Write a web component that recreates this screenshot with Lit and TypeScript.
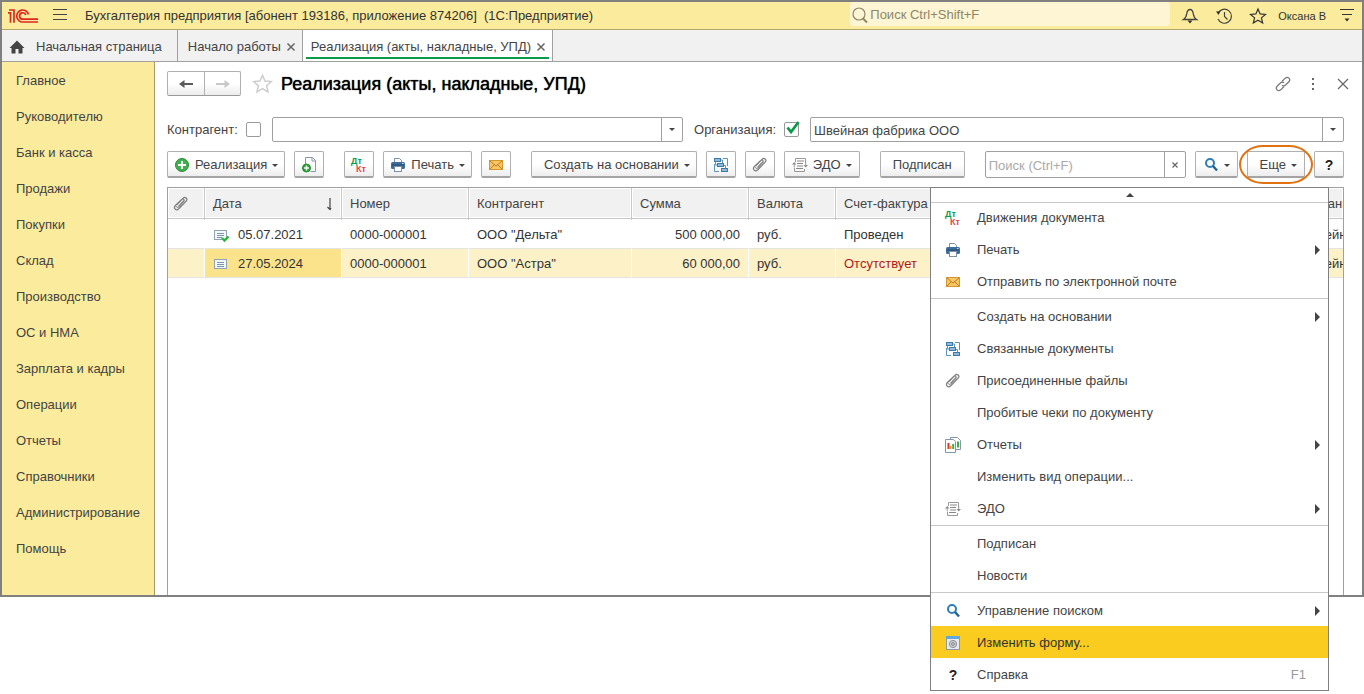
import { LitElement, html, svg, css, nothing, TemplateResult } from "lit";
import { customElement, property, state } from "lit/decorators.js";
import { classMap } from "lit/directives/class-map.js";

const ICONS: Record<string, TemplateResult> = {
  plus: svg`<circle cx="8" cy="8" r="6.500" fill="#3fb04c" stroke="#2a8a38"/><path d="M8 4v8M4 8h8" stroke="#fff" stroke-width="2"/>`,
  copy: svg`<path d="M4.500 7V.5h7l3 3v11h-5" fill="#fff" stroke="#8496a8"/><path d="M11 .5V4h3.500" fill="none" stroke="#8496a8"/><circle cx="5.500" cy="11" r="4" fill="#2fa33d" stroke="#1f8a2e"/><path d="M5.500 8.500v5M3 11h5" stroke="#fff" stroke-width="1.400"/>`,
  dtkt: svg`<g font-family="Liberation Sans, Arial, sans-serif" font-size="9" font-weight="bold"><text x="0" y="7" fill="#0a9a4a">Дт</text><text x="5" y="15" fill="#e04848">Кт</text></g>`,
  print: svg`<path d="M4.500 5V1.500h5l2 2V5" fill="#fff" stroke="#7890a8"/><rect x="1" y="5" width="14" height="7" rx="1.500" fill="#3f6d99"/><path d="M2 8h12" stroke="#24486c"/><path d="M12 6.500h1.500" stroke="#cfe0ee"/><rect x="4.500" y="9.500" width="7" height="5" fill="#fff" stroke="#7890a8"/>`,
  mail: svg`<rect x="1.500" y="3.500" width="13" height="9" fill="#f6c566" stroke="#d6962e"/><path d="M2 4l6 5 6-5M2 12l4.500-4.500M14 12L9.500 7.500" fill="none" stroke="#c07c1c"/>`,
  tree: svg`<g fill="#8fb8da" stroke="#3c7aa8"><rect x="1.500" y="1.500" width="6" height="3"/><rect x="4.500" y="6.500" width="6" height="3"/><rect x="8.500" y="11.500" width="6" height="3"/></g><path d="M10 1.500h4.500V9M1.500 7v7.500H6M2.500 5v3H4M8 3h1.500v3M12.500 11V8.500H11" fill="none" stroke="#5b93bd"/>`,
  clip: svg`<path d="M4 8.500l6-6.200c2.200-2.200 5.200.5 3.200 2.800l-7.400 7.600c-2.800 2.600-5.800-.5-3.400-3.200L9 3.200c1.300-1 2.700.4 1.700 1.600L5.500 10.300" fill="none" stroke="#7c7c7c" stroke-width="1.200"/><path d="M11.800 4.500L5.500 11.300c-1.200.9-2.400-.2-1.500-1.400" fill="none" stroke="#7c7c7c"/>`,
  edo: svg`<path d="M3.500 5V1.500h10V6M2.500 10.500v4h10V12" fill="none" stroke="#999"/><path d="M5 4h7M5 6.500h6M5 9h6M4 11.500h7" stroke="#888"/><path d="M0 7.500h4.500L2.200 5zM11.500 8h4.500l-2.300 2.500z" fill="#8d8d8d"/><path d="M2.200 7v3M13.700 5v3" stroke="#999"/>`,
  search: svg`<circle cx="7" cy="6" r="4" fill="none" stroke="#2f7fb5" stroke-width="2"/><path d="M10 9l4 4.500" stroke="#1f6496" stroke-width="2.400"/>`,
  report: svg`<path d="M5.500.5h7l3 3v9h-10z" fill="#fff" stroke="#8496a8"/><path d="M13 4.500v6" stroke="#3cae4a" stroke-width="2"/><path d="M.5 2.500h8l2 2v11H.5z" fill="#fff" stroke="#8496a8"/><path d="M3.500 6v6" stroke="#d8392b" stroke-width="2"/><path d="M5.800 9v3" stroke="#f08c2a" stroke-width="1.500"/><path d="M8.200 7v5" stroke="#3cae4a" stroke-width="2"/>`,
  form: svg`<rect x="1.500" y="1.500" width="13" height="13" fill="#e7e9ea" stroke="#8e9aa3"/><rect x="1" y="1" width="14" height="3" fill="#5fa8e0"/><circle cx="8" cy="9" r="3.600" fill="#c9ced2" stroke="#8a9299"/><circle cx="8" cy="9" r="1.300" fill="#fff" stroke="#777"/>`,
  doc: svg`<rect x="1.500" y="3.500" width="12" height="9" fill="#f4f8fb" stroke="#8fa3b5"/><path d="M4 6.500h7M4 8.500h7M4 10.500h7" stroke="#7d95aa"/>`,
  docOk: svg`<rect x="1.500" y="3.500" width="12" height="9" fill="#f4f8fb" stroke="#8fa3b5"/><path d="M4 6.500h7M4 8.500h7M4 10.500h5" stroke="#7d95aa"/><path d="M9 11l2.500 2.500L15.500 9.500" fill="none" stroke="#2cb53c" stroke-width="2.400"/>`,
  home: svg`<path d="M8 1.500L15.500 9H13.500v5.500H9.500V10h-3v4.500H2.500V9H.5z" fill="#444"/>`,
  back: svg`<path d="M1 8l5.500-4v3H15v2H6.500v3z" fill="#5a5a5a"/>`,
  forward: svg`<path d="M15 8L9.500 4v3H1v2h8.500v3z" fill="#c8c8c8"/>`,
  link: svg`<g fill="none" stroke="#777" stroke-width="1.200"><path d="M7 5.500l3.200-3.300c2.800-2.400 6 .9 3.700 3.600L10.600 9c-1.200 1.100-2.600 1-3.600.2"/><path d="M9 10.500l-3.200 3.300c-2.800 2.400-6-.9-3.700-3.600L5.400 7C6.600 5.900 8 6 9 6.800"/></g>`,
  dots: svg`<path d="M7 2h2v2H7zM7 7h2v2H7zM7 12h2v2H7z" fill="#666"/>`,
  close: svg`<path d="M3 3l10 10M13 3L3 13" stroke="#666" stroke-width="1.200"/>`,
  tabClose: svg`<path d="M4.500 4.500l7 7M11.500 4.500l-7 7" stroke="#666" stroke-width="1.500"/>`,
  smallClose: svg`<path d="M5.500 5.500l5 5M10.500 5.500l-5 5" stroke="#666" stroke-width="1.200"/>`,
  sortDown: svg`<path d="M8 2v11M5.500 11L8 13.500 9 12" fill="none" stroke="#444" stroke-width="1.200"/>`,
  bell: svg`<path d="M1.500 11.500c2-1.200 2.800-3 3.300-6C5.200 3 6 1.500 8 1.500s2.800 1.500 3.200 4c.5 3 1.300 4.800 3.300 6z" fill="none" stroke="#444" stroke-width="1.300"/><path d="M5.500 12.500h5L8 15.500z" fill="#333"/>`,
  history: svg`<path d="M2.200 5A7 7 0 1 1 2 11" fill="none" stroke="#444" stroke-width="1.200"/><path d="M0 3.500l4.500-.2L2.500 7z" fill="#333"/><path d="M8.500 4v4.500l3 3" fill="none" stroke="#444" stroke-width="1.200"/>`,
  star: svg`<path d="M8 1l2.100 4.900 5.400.5-4.100 3.500 1.300 5.200L8 12.300l-4.700 2.800 1.300-5.200L.5 6.400l5.400-.5z" fill="none" stroke="currentColor" stroke-width="1.200"/>`,
  lines: svg`<path d="M1 3.500h14M3 8.500h10" stroke="#333" stroke-width="1.200"/><path d="M5.500 12.500h5L8 15.500z" fill="#333"/>`,
  burger: svg`<path d="M1 3.500h14M1 8.500h14M1 13.500h14" stroke="#444"/>`,
  lens: svg`<circle cx="7" cy="7" r="6" fill="none" stroke="#8d8668" stroke-width="1.200"/><path d="M11 11.500l4 4" stroke="#8d8668" stroke-width="2"/>`,
};

@customElement("ui-icon")
class UiIcon extends LitElement {
  @property() name = "";
  static styles = css`
    :host { display: inline-flex; flex: none; width: 16px; height: 16px; }
    svg { display: block; width: 100%; height: 100%; overflow: visible; }
  `;
  render() {
    return html`<svg viewBox="0 0 16 16" aria-hidden="true">${ICONS[this.name] ?? nothing}</svg>`;
  }
}

interface MenuEntry { text: string; icon?: string; sub?: boolean; key?: string; }

const SECTIONS = ["Главное", "Руководителю", "Банк и касса", "Продажи", "Покупки", "Склад", "Производство",
  "ОС и НМА", "Зарплата и кадры", "Операции", "Отчеты", "Справочники", "Администрирование", "Помощь"];

const MENU: MenuEntry[][] = [
  [
    { text: "Движения документа", icon: "dtkt" },
    { text: "Печать", icon: "print", sub: true },
    { text: "Отправить по электронной почте", icon: "mail" },
  ],
  [
    { text: "Создать на основании", sub: true },
    { text: "Связанные документы", icon: "tree" },
    { text: "Присоединенные файлы", icon: "clip" },
    { text: "Пробитые чеки по документу" },
    { text: "Отчеты", icon: "report", sub: true },
    { text: "Изменить вид операции..." },
    { text: "ЭДО", icon: "edo", sub: true },
  ],
  [{ text: "Подписан" }, { text: "Новости" }],
  [
    { text: "Управление поиском", icon: "search", sub: true },
    { text: "Изменить форму...", icon: "form" },
    { text: "Справка", icon: "help", key: "F1" },
  ],
];

const ROWS = [
  { icon: "docOk", date: "05.07.2021", num: "0000-000001", party: "ООО \"Дельта\"", sum: "500 000,00", cur: "руб.", invoice: "Проведен", org: "Швейная" },
  { icon: "doc", date: "27.05.2024", num: "0000-000001", party: "ООО \"Астра\"", sum: "60 000,00", cur: "руб.", invoice: "Отсутствует", org: "Швейная" },
];

@customElement("app-root")
class AppRoot extends LitElement {
  @state() private selected = 1;
  @state() private active = "Изменить форму...";

  static styles = css`
    :host { display: block; min-height: 100vh; background: #fff; font: 13px/16px "Liberation Sans", Arial, sans-serif; color: #444; }
    * { box-sizing: border-box; }
    button, input { font: inherit; color: inherit; margin: 0; }
    button { padding: 0; border: 0; background: none; }
    a { color: inherit; text-decoration: none; }

    .window { display: flex; flex-direction: column; border: 2px solid #808080; background: #fff; }

    .titlebar { display: flex; align-items: center; height: 28px; padding: 0 7px 0 6px; background: #fbeb9c; border-bottom: 1px solid #b3a76c; }
    .logo { flex: none; width: 30px; height: 16px; margin-right: 14px; }
    .app-title { margin-left: 17px; flex: 1; white-space: nowrap; color: #333; }
    .global-search { display: flex; align-items: center; gap: 2px; width: 320px; height: 24px; align-self: flex-start; padding: 2px 2px 0; background: #fdf5d3; border-radius: 3px; }
    .global-search input { flex: 1; min-width: 0; border: 0; padding: 0; background: none; outline: 0; }
    .global-search input::placeholder { color: #8d8668; opacity: 1; }
    .tools { display: flex; align-items: center; gap: 18px; margin-left: 12px; color: #333; }
    .tools button { display: flex; }
    .user { font-size: 11px; margin: 0 13px 0 12px; color: #333; }

    .tabs { display: flex; height: 32px; background: #f1f1f1; border-bottom: 1px solid #a0a0a0; }
    .tab { display: flex; align-items: center; gap: 2px; padding: 2px 3px 0 10px; border-right: 1px solid #a0a0a0; white-space: nowrap; }
    .tab.start { gap: 11px; padding: 2px 15px 0 7px; }
    .tab.current { position: relative; padding-left: 8px; background: #fff; }
    .tab.current::after { content: ""; position: absolute; left: 3px; right: 3px; bottom: 2px; height: 2px; background: #0a9a4a; }
    .tab button { display: flex; }

    .body { display: flex; }
    .sidebar { flex: none; width: 153px; padding-bottom: 29px; background: #fbeb9c; border-right: 1px solid #a79c68; }
    .sidebar a { display: flex; align-items: center; height: 36px; padding: 2px 0 0 14px; white-space: nowrap; }

    .main { flex: 1; min-width: 0; display: flex; flex-direction: column; padding: 9px 18px 0 12px; }
    .heading { display: flex; align-items: center; height: 25px; }
    .nav { display: flex; height: 25px; border: 1px solid #b0b0b0; border-bottom-color: #999; border-radius: 2px; background: linear-gradient(#fff 50%, #ececec); }
    .nav button { display: flex; align-items: center; justify-content: center; width: 36px; }
    .nav button + button { border-left: 1px solid #b0b0b0; }
    .fav { display: flex; margin: 0 9px 0 12px; color: #ccc; }
    .fav ui-icon { width: 19px; height: 19px; }
    h1 { flex: 1; margin: 0; font-size: 18px; line-height: 24px; font-weight: 400; color: #000; text-shadow: 0 0 1px #000; white-space: nowrap; }
    .window-tools { display: flex; gap: 14px; margin-right: -7px; }
    .window-tools button { display: flex; }

    .filters { display: flex; align-items: center; margin-top: 21px; height: 25px; }
    .field-label { margin-right: 8px; white-space: nowrap; }
    .check { display: grid; flex: none; margin-right: 11px; }
    .check > * { grid-area: 1 / 1; }
    .check input { appearance: none; width: 15px; height: 15px; border: 1px solid #999; border-radius: 2px; background: #fff; }
    .check svg { width: 15px; height: 15px; overflow: visible; pointer-events: none; }
    .combo { display: flex; min-width: 0; height: 25px; border: 1px solid #a0a0a0; border-radius: 2px; background: #fff; }
    .combo input { flex: 1; min-width: 0; border: 0; outline: 0; padding: 2px 3px 0; background: none; }
    .combo button { display: flex; align-items: center; justify-content: center; width: 21px; border-left: 1px solid #a0a0a0; }
    .party { flex: 10 1 0; margin-right: 11px; }
    .org { flex: 13 1 0; }

    .toolbar { position: relative; display: flex; gap: 9px; margin-top: 9px; height: 27px; }
    .btn { position: relative; display: flex; align-items: center; justify-content: center; gap: 5px; flex: none; padding: 2px 6px 0; min-width: 30px; height: 27px; border: 1px solid #b0b0b0; border-bottom: 2px solid #a4a4a4; border-radius: 2px; background: linear-gradient(#fff 50%, #ededed); white-space: nowrap; }
    .btn.apart { margin-left: 11px; }
    .btn.text { padding: 2px 12px 0; }
    .btn.wide { padding: 2px 7px 0; }
    .btn.create, .btn.more { padding-left: 12px; }
    .btn.help, .q { font-size: 14px; font-weight: 700; color: #222; }
    .caret { flex: none; border: solid transparent; border-width: 3px 3px 0; border-top-color: #444; }
    .combo.find { flex: 1; height: 27px; margin-left: 11px; }
    .find input::placeholder { color: #aaa; opacity: 1; }
    .ring { position: absolute; inset: -7px -9px -8px; border: 2px solid #e2710f; border-radius: 26px / 21px; pointer-events: none; }

    .list { flex: 1; margin-top: 9px; border: 1px solid #a0a0a0; border-bottom: 0; overflow: hidden; }
    table { width: 100%; table-layout: fixed; border-collapse: separate; border-spacing: 0; color: #333; }
    th, td { padding: 0 8px; overflow: hidden; white-space: nowrap; text-align: left; font-weight: 400; }
    th { height: 32px; background: #f1f1f1; border-right: 1px solid #c8c8c8; color: #444;
      box-shadow: inset 0 -1px #fff, inset 0 -2px #c8c8c8, inset 0 -3px #fff, inset 1px 1px #fff, inset -1px 0 #fff; }
    td { height: 29px; padding-top: 2px; border-right: 1px solid #fff; border-bottom: 1px solid #e4e4e4; }
    th ui-icon, td ui-icon { vertical-align: middle; }
    .c-clip { width: 37px; }
    .c-date { width: 137px; }
    .c-num { width: 127px; }
    .c-party { width: 163px; }
    .c-sum { width: 117px; }
    .c-cur { width: 87px; }
    .c-inv { width: 127px; }
    .c-org { width: 47px; }
    .c-org-cell { padding-left: 10px; padding-right: 0; border-right: 0; }
    .num { text-align: right; }
    .with-icon { display: flex; align-items: center; gap: 9px; }
    .sortable { display: flex; justify-content: space-between; margin-right: -5px; }
    .clip-head { padding-left: 5px; }
    tr.sel td { background: #fdf1c7; }
    tr.sel td.cell { background: #fbe38c; }
    tr td.missing { color: #b01818; }

    .menu { position: absolute; z-index: 2; top: 36px; right: 15px; width: 399px; background: #fff; border: 1px solid #808080; }
    .scroll-up { display: flex; align-items: center; justify-content: center; width: 100%; height: 15px; margin-bottom: -2px; border-bottom: 1px solid #c8c8c8; }
    .scroll-up i { border: solid transparent; border-width: 0 4px 4px; border-bottom-color: #444; }
    .group + .group { margin-top: 1px; border-top: 1px solid #c8c8c8; padding-top: 1px; }
    .item { display: flex; align-items: center; width: 100%; height: 32px; padding: 2px 8px 0 14px; text-align: left; }
    .item.active { background: #facc1f; color: #333; }
    .slot { display: flex; justify-content: center; width: 16px; margin-right: 16px; }
    .item-text { flex: 1; }
    .key { margin-right: 14px; color: #999; }
    .arrow { border: solid transparent; border-width: 5px 0 5px 5px; border-left-color: #444; }
  `;

  private tool(icon: string, label: string, cls = "") {
    return html`<button class="btn ${cls}" aria-label=${label}><ui-icon name=${icon}></ui-icon></button>`;
  }

  private renderMenu() {
    return html`<div class="menu" role="menu">
      <button class="scroll-up" aria-label="Вверх"><i></i></button>
      ${MENU.map((group) => html`<div class="group">
        ${group.map((e) => html`<button role="menuitem"
          class=${classMap({ item: true, active: e.text === this.active })}
          @mouseenter=${() => { this.active = e.text; }}>
          <span class="slot">${e.icon === "help" ? html`<span class="q">?</span>` : e.icon ? html`<ui-icon name=${e.icon}></ui-icon>` : nothing}</span>
          <span class="item-text">${e.text}</span>
          ${e.key ? html`<span class="key">${e.key}</span>` : nothing}
          ${e.sub ? html`<span class="arrow"></span>` : nothing}
        </button>`)}
      </div>`)}
    </div>`;
  }

  render() {
    return html`
      <div class="window">
        <header class="titlebar">
          <svg class="logo" viewBox="0 0 30 16" aria-hidden="true">
            <g fill="none" stroke="#dc2a20" stroke-width="1.700">
              <path d="M0 4.800h2.500V14.800M1 2h5V14.800"/>
              <path d="M20.500 6.500A6 6 0 1 0 15 14H30M17.800 7A3.200 3.200 0 1 0 15 11.200H30"/>
            </g>
          </svg>
          <button aria-label="Меню"><ui-icon name="burger"></ui-icon></button>
          <span class="app-title">Бухгалтерия предприятия [абонент 193186, приложение 874206]&nbsp; (1С:Предприятие)</span>
          <label class="global-search"><ui-icon name="lens"></ui-icon><input aria-label="Поиск" placeholder="Поиск Ctrl+Shift+F"></label>
          <div class="tools">
            <button aria-label="Уведомления"><ui-icon name="bell"></ui-icon></button>
            <button aria-label="История"><ui-icon name="history"></ui-icon></button>
            <button aria-label="Избранное"><ui-icon name="star"></ui-icon></button>
          </div>
          <a class="user" href="#">Оксана В</a>
          <button aria-label="Настройки"><ui-icon name="lines"></ui-icon></button>
        </header>

        <nav class="tabs">
          <a class="tab start" href="#"><ui-icon name="home"></ui-icon>Начальная страница</a>
          <div class="tab"><a href="#">Начало работы</a><button aria-label="Закрыть"><ui-icon name="tabClose"></ui-icon></button></div>
          <div class="tab current"><a href="#">Реализация (акты, накладные, УПД)</a><button aria-label="Закрыть"><ui-icon name="tabClose"></ui-icon></button></div>
        </nav>

        <div class="body">
          <nav class="sidebar">${SECTIONS.map((s) => html`<a href="#">${s}</a>`)}</nav>
          <main class="main">
            <div class="heading">
              <div class="nav">
                <button aria-label="Назад"><ui-icon name="back"></ui-icon></button>
                <button aria-label="Вперед" disabled><ui-icon name="forward"></ui-icon></button>
              </div>
              <button class="fav" aria-label="В избранное"><ui-icon name="star"></ui-icon></button>
              <h1>Реализация (акты, накладные, УПД)</h1>
              <div class="window-tools">
                <button aria-label="Ссылка"><ui-icon name="link"></ui-icon></button>
                <button aria-label="Действия"><ui-icon name="dots"></ui-icon></button>
                <button aria-label="Закрыть"><ui-icon name="close"></ui-icon></button>
              </div>
            </div>

            <div class="filters">
              <label class="field-label" for="use-party">Контрагент:</label>
              <span class="check"><input id="use-party" type="checkbox"></span>
              <div class="combo party"><input aria-label="Контрагент"><button aria-label="Выбрать"><i class="caret"></i></button></div>
              <label class="field-label" for="use-org">Организация:</label>
              <span class="check"><input id="use-org" type="checkbox" checked>
                <svg viewBox="0 0 15 15" aria-hidden="true"><path d="M3.500 5.500l3.500 4.500L14.500 0" fill="none" stroke="#0a9a4a" stroke-width="2.800"/></svg></span>
              <div class="combo org"><input aria-label="Организация" .value=${"Швейная фабрика ООО"}><button aria-label="Выбрать"><i class="caret"></i></button></div>
            </div>

            <div class="toolbar">
              <button class="btn"><ui-icon name="plus"></ui-icon>Реализация<i class="caret"></i></button>
              ${this.tool("copy", "Скопировать")}
              ${this.tool("dtkt", "Движения документа", "apart")}
              <button class="btn"><ui-icon name="print"></ui-icon>Печать<i class="caret"></i></button>
              ${this.tool("mail", "Отправить")}
              <button class="btn apart create">Создать на основании<i class="caret"></i></button>
              ${this.tool("tree", "Связанные документы")}
              ${this.tool("clip", "Присоединенные файлы")}
              <button class="btn wide"><ui-icon name="edo"></ui-icon>ЭДО<i class="caret"></i></button>
              <button class="btn apart text">Подписан</button>
              <div class="combo find"><input aria-label="Поиск" placeholder="Поиск (Ctrl+F)"><button aria-label="Очистить"><ui-icon name="smallClose"></ui-icon></button></div>
              <button class="btn wide" aria-label="Найти"><ui-icon name="search"></ui-icon><i class="caret"></i></button>
              <button class="btn wide more">Еще<i class="caret"></i><span class="ring"></span></button>
              <button class="btn help">?</button>
              ${this.renderMenu()}
            </div>

            <div class="list">
              <table>
                <colgroup>
                  <col class="c-clip"><col class="c-date"><col class="c-num"><col class="c-party"><col class="c-sum"><col class="c-cur"><col class="c-inv"><col><col class="c-org">
                </colgroup>
                <thead><tr>
                  <th class="clip-head"><ui-icon name="clip"></ui-icon></th>
                  <th><span class="sortable">Дата<ui-icon name="sortDown"></ui-icon></span></th>
                  <th>Номер</th><th>Контрагент</th><th>Сумма</th><th>Валюта</th><th>Счет-фактура</th><th></th>
                  <th class="c-org-cell">Организация</th>
                </tr></thead>
                <tbody>${ROWS.map((r, i) => html`<tr class=${classMap({ sel: i === this.selected })} @click=${() => { this.selected = i; }}>
                  <td></td>
                  <td class="cell"><span class="with-icon"><ui-icon name=${r.icon}></ui-icon>${r.date}</span></td>
                  <td>${r.num}</td><td>${r.party}</td><td class="num">${r.sum}</td><td>${r.cur}</td>
                  <td class=${classMap({ missing: r.invoice === "Отсутствует" })}>${r.invoice}</td><td></td>
                  <td class="c-org-cell">${r.org}</td>
                </tr>`)}</tbody>
              </table>
            </div>
          </main>
        </div>
      </div>`;
  }
}
